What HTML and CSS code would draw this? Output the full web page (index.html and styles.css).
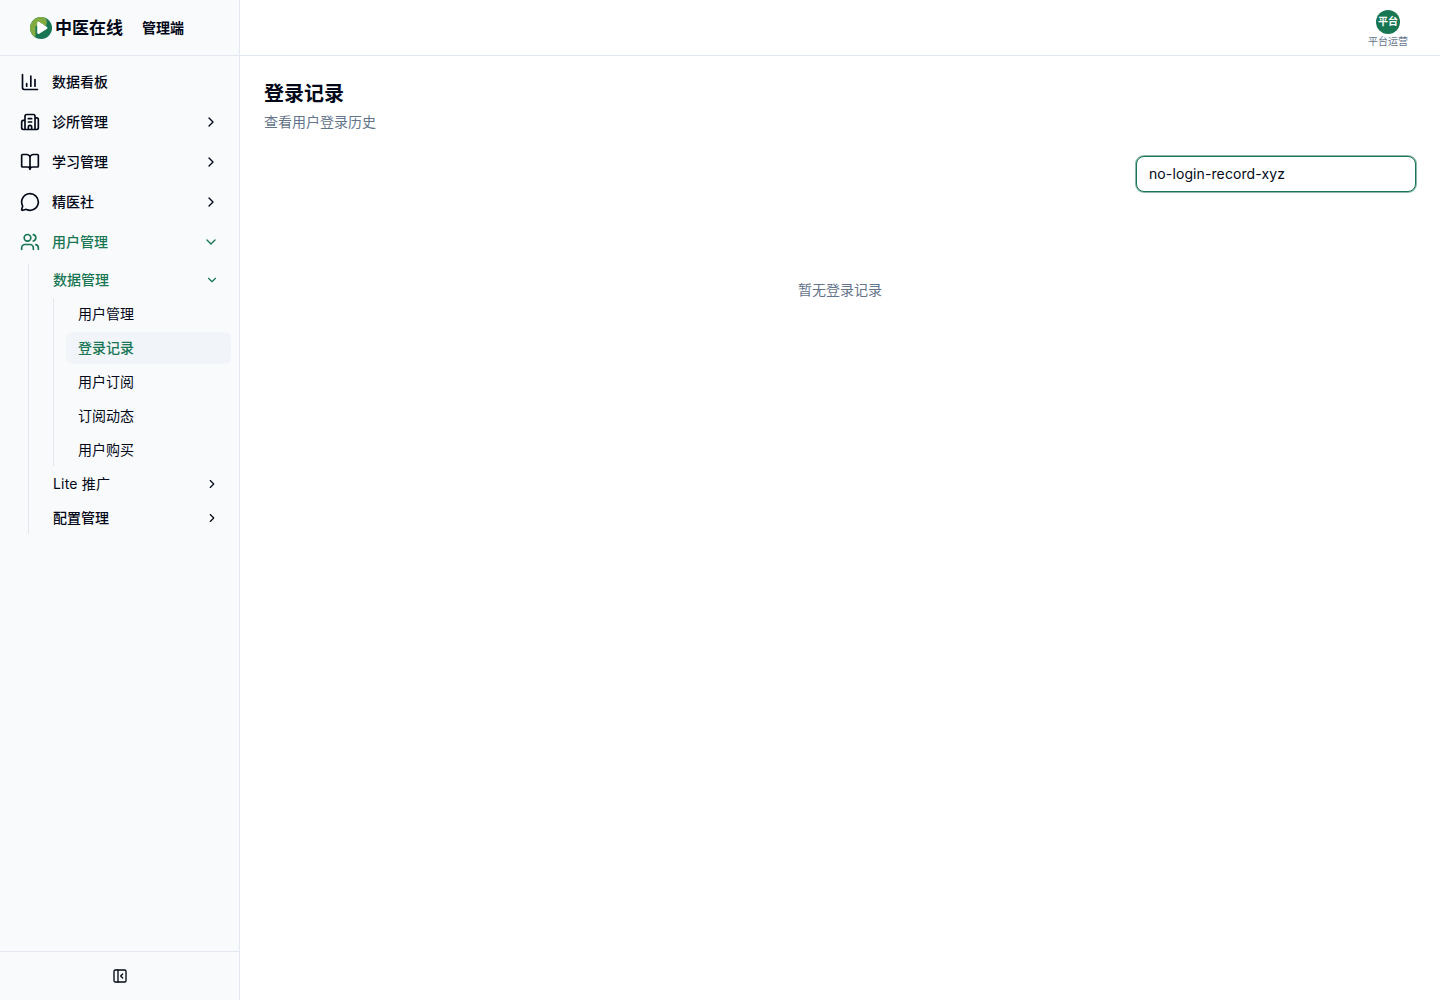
FILE: index.html
```html
<!DOCTYPE html>
<html lang="zh-CN">
<head>
<meta charset="utf-8">
<title>登录记录</title>
<link rel="stylesheet" href="styles.css">
</head>
<body>
<div class="app">
  <aside class="sidebar">
    <div class="brand">
      <svg class="logo" viewBox="0 0 22 22"><circle cx="11" cy="11" r="11" fill="#187653"/><path d="M14.500.570A11 11 0 0 0 5 20.200C6 18.500 5.500 17 5.500 14V9L16 8.500C17.500 5.500 17 2.500 14.500.570Z" fill="#82ac42"/><path d="M7.200 6.200c0-1.300 1-1.700 2-1.100l7.500 4.700c1 .6 1 1.700 0 2.300l-7.500 4.600c-1 .6-2 .1-2-1.100Z" fill="#fff"/></svg>
      <span class="brand-name">中医在线</span>
      <span class="brand-role">管理端</span>
    </div>
    <nav class="nav">
      <a class="item"><svg class="icon" viewBox="0 0 24 24"><path d="M3 3v16a2 2 0 0 0 2 2h16M18 17V9M13 17V5M8 17v-3"/></svg><span>数据看板</span></a>
      <a class="item"><svg class="icon" viewBox="0 0 24 24"><path d="M10 12h4M10 8h4M14 21v-3a2 2 0 0 0-4 0v3M6 10H4a2 2 0 0 0-2 2v7a2 2 0 0 0 2 2h16a2 2 0 0 0 2-2V9a2 2 0 0 0-2-2h-2M6 21V5a2 2 0 0 1 2-2h8a2 2 0 0 1 2 2v16"/></svg><span>诊所管理</span><svg class="chevron" viewBox="0 0 24 24"><path d="m9 18 6-6-6-6"/></svg></a>
      <a class="item"><svg class="icon" viewBox="0 0 24 24"><path d="M12 7v14M3 18a1 1 0 0 1-1-1V4a1 1 0 0 1 1-1h5a4 4 0 0 1 4 4 4 4 0 0 1 4-4h5a1 1 0 0 1 1 1v13a1 1 0 0 1-1 1h-6a3 3 0 0 0-3 3 3 3 0 0 0-3-3z"/></svg><span>学习管理</span><svg class="chevron" viewBox="0 0 24 24"><path d="m9 18 6-6-6-6"/></svg></a>
      <a class="item"><svg class="icon" viewBox="0 0 24 24"><path d="M2.992 16.342a2 2 0 0 1 .094 1.167l-1.065 3.290a1 1 0 0 0 1.236 1.168l3.413-.998a2 2 0 0 1 1.099.092 10 10 0 1 0-4.777-4.719"/></svg><span>精医社</span><svg class="chevron" viewBox="0 0 24 24"><path d="m9 18 6-6-6-6"/></svg></a>
      <a class="item active"><svg class="icon" viewBox="0 0 24 24"><path d="M16 21v-2a4 4 0 0 0-4-4H6a4 4 0 0 0-4 4v2M16 3.128a4 4 0 0 1 0 7.744M22 21v-2a4 4 0 0 0-3-3.870"/><circle cx="9" cy="7" r="4"/></svg><span>用户管理</span><svg class="chevron" viewBox="0 0 24 24"><path d="m6 9 6 6 6-6"/></svg></a>
      <div class="group">
        <a class="sub active"><span>数据管理</span><svg class="chevron" viewBox="0 0 24 24"><path d="m6 9 6 6 6-6"/></svg></a>
        <div class="leaves">
          <a class="leaf">用户管理</a>
          <a class="leaf selected">登录记录</a>
          <a class="leaf">用户订阅</a>
          <a class="leaf">订阅动态</a>
          <a class="leaf">用户购买</a>
        </div>
        <a class="sub"><span class="latin">Lite 推广</span><svg class="chevron" viewBox="0 0 24 24"><path d="m9 18 6-6-6-6"/></svg></a>
        <a class="sub"><span>配置管理</span><svg class="chevron" viewBox="0 0 24 24"><path d="m9 18 6-6-6-6"/></svg></a>
      </div>
    </nav>
    <div class="collapse"><svg class="panel" viewBox="0 0 24 24"><rect x="3" y="3" width="18" height="18" rx="2"/><path d="M9 3v18M16 15l-3-3 3-3"/></svg></div>
  </aside>
  <div class="content">
    <header class="topbar">
      <div class="user"><span class="avatar">平台</span><span class="user-name">平台运营</span></div>
    </header>
    <main class="main">
      <h1 class="title">登录记录</h1>
      <p class="subtitle">查看用户登录历史</p>
      <div class="toolbar"><input class="search" type="text" value="no-login-record-xyz"></div>
      <div class="empty">暂无登录记录</div>
    </main>
  </div>
</div>
</body>
</html>
```
FILE: styles.css
```css
* { box-sizing: border-box; }
body { margin: 0; font: 14px/20px Inter, "Noto Sans CJK SC", sans-serif; color: #020817; background: #fff; }
svg { fill: none; stroke: currentColor; stroke-width: 2; stroke-linecap: round; stroke-linejoin: round; flex: none; }
.app { display: flex; height: 1000px; }
.sidebar { width: 240px; display: flex; flex-direction: column; background: #f9fafc; border-right: 1px solid #e2e8f0; }
.brand { height: 56px; display: flex; align-items: center; padding-left: 30px; border-bottom: 1px solid #e2e8f0; }
.logo { width: 22px; height: 22px; stroke: none; }
.brand-name { margin-left: 3px; font-size: 17px; line-height: 22px; font-weight: 600; }
.brand-role { margin-left: 19px; font-weight: 600; }
.nav { flex: 1; padding: 8px; }
.item { height: 36px; margin-bottom: 4px; display: flex; align-items: center; gap: 12px; padding: 0 12px; font-weight: 500; }
.icon { width: 20px; height: 20px; }
.chevron { width: 16px; height: 16px; margin-left: auto; }
.active { color: #187653; }
.group { margin-left: 20px; padding-left: 12px; border-left: 1px solid #e2e8f0; display: flex; flex-direction: column; gap: 2px; }
.sub { height: 32px; display: flex; align-items: center; padding: 0 12px; font-weight: 500; }
.sub .chevron { width: 14px; height: 14px; }
.latin { font-weight: 400; letter-spacing: .2px; }
.leaves { margin-left: 12px; padding-left: 12px; border-left: 1px solid #e2e8f0; display: flex; flex-direction: column; gap: 2px; }
.leaf { height: 32px; padding: 6px 12px; border-radius: 6px; }
.selected { background: #f1f5f9; color: #187653; font-weight: 500; }
.collapse { height: 49px; display: flex; align-items: center; justify-content: center; border-top: 1px solid #e2e8f0; }
.panel { width: 16px; height: 16px; }
.content { flex: 1; }
.topbar { height: 56px; display: flex; justify-content: flex-end; align-items: center; padding: 2px 32px 0 0; border-bottom: 1px solid #e2e8f0; }
.user { display: flex; flex-direction: column; align-items: center; gap: 1px; }
.avatar { width: 24px; height: 24px; border-radius: 50%; background: #187653; color: #fff; font-size: 10px; line-height: 23px; font-weight: 700; text-align: center; }
.user-name { font-size: 10px; line-height: 12px; color: #64748b; }
.main { padding: 24px; }
.title { margin: 0; font-size: 20px; line-height: 29px; font-weight: 600; }
.subtitle { margin: 3px 0 0; color: #64748b; }
.toolbar { margin-top: 24px; display: flex; justify-content: flex-end; }
.search { width: 280px; height: 36px; padding: 0 12px 2px; border: 1px solid #187653; border-radius: 8px; outline: 0; box-shadow: 0 0 0 1px #18765380; font: inherit; letter-spacing: .1px; color: inherit; background: #fff; }
.empty { padding: 88px 0; text-align: center; color: #64748b; }
```
